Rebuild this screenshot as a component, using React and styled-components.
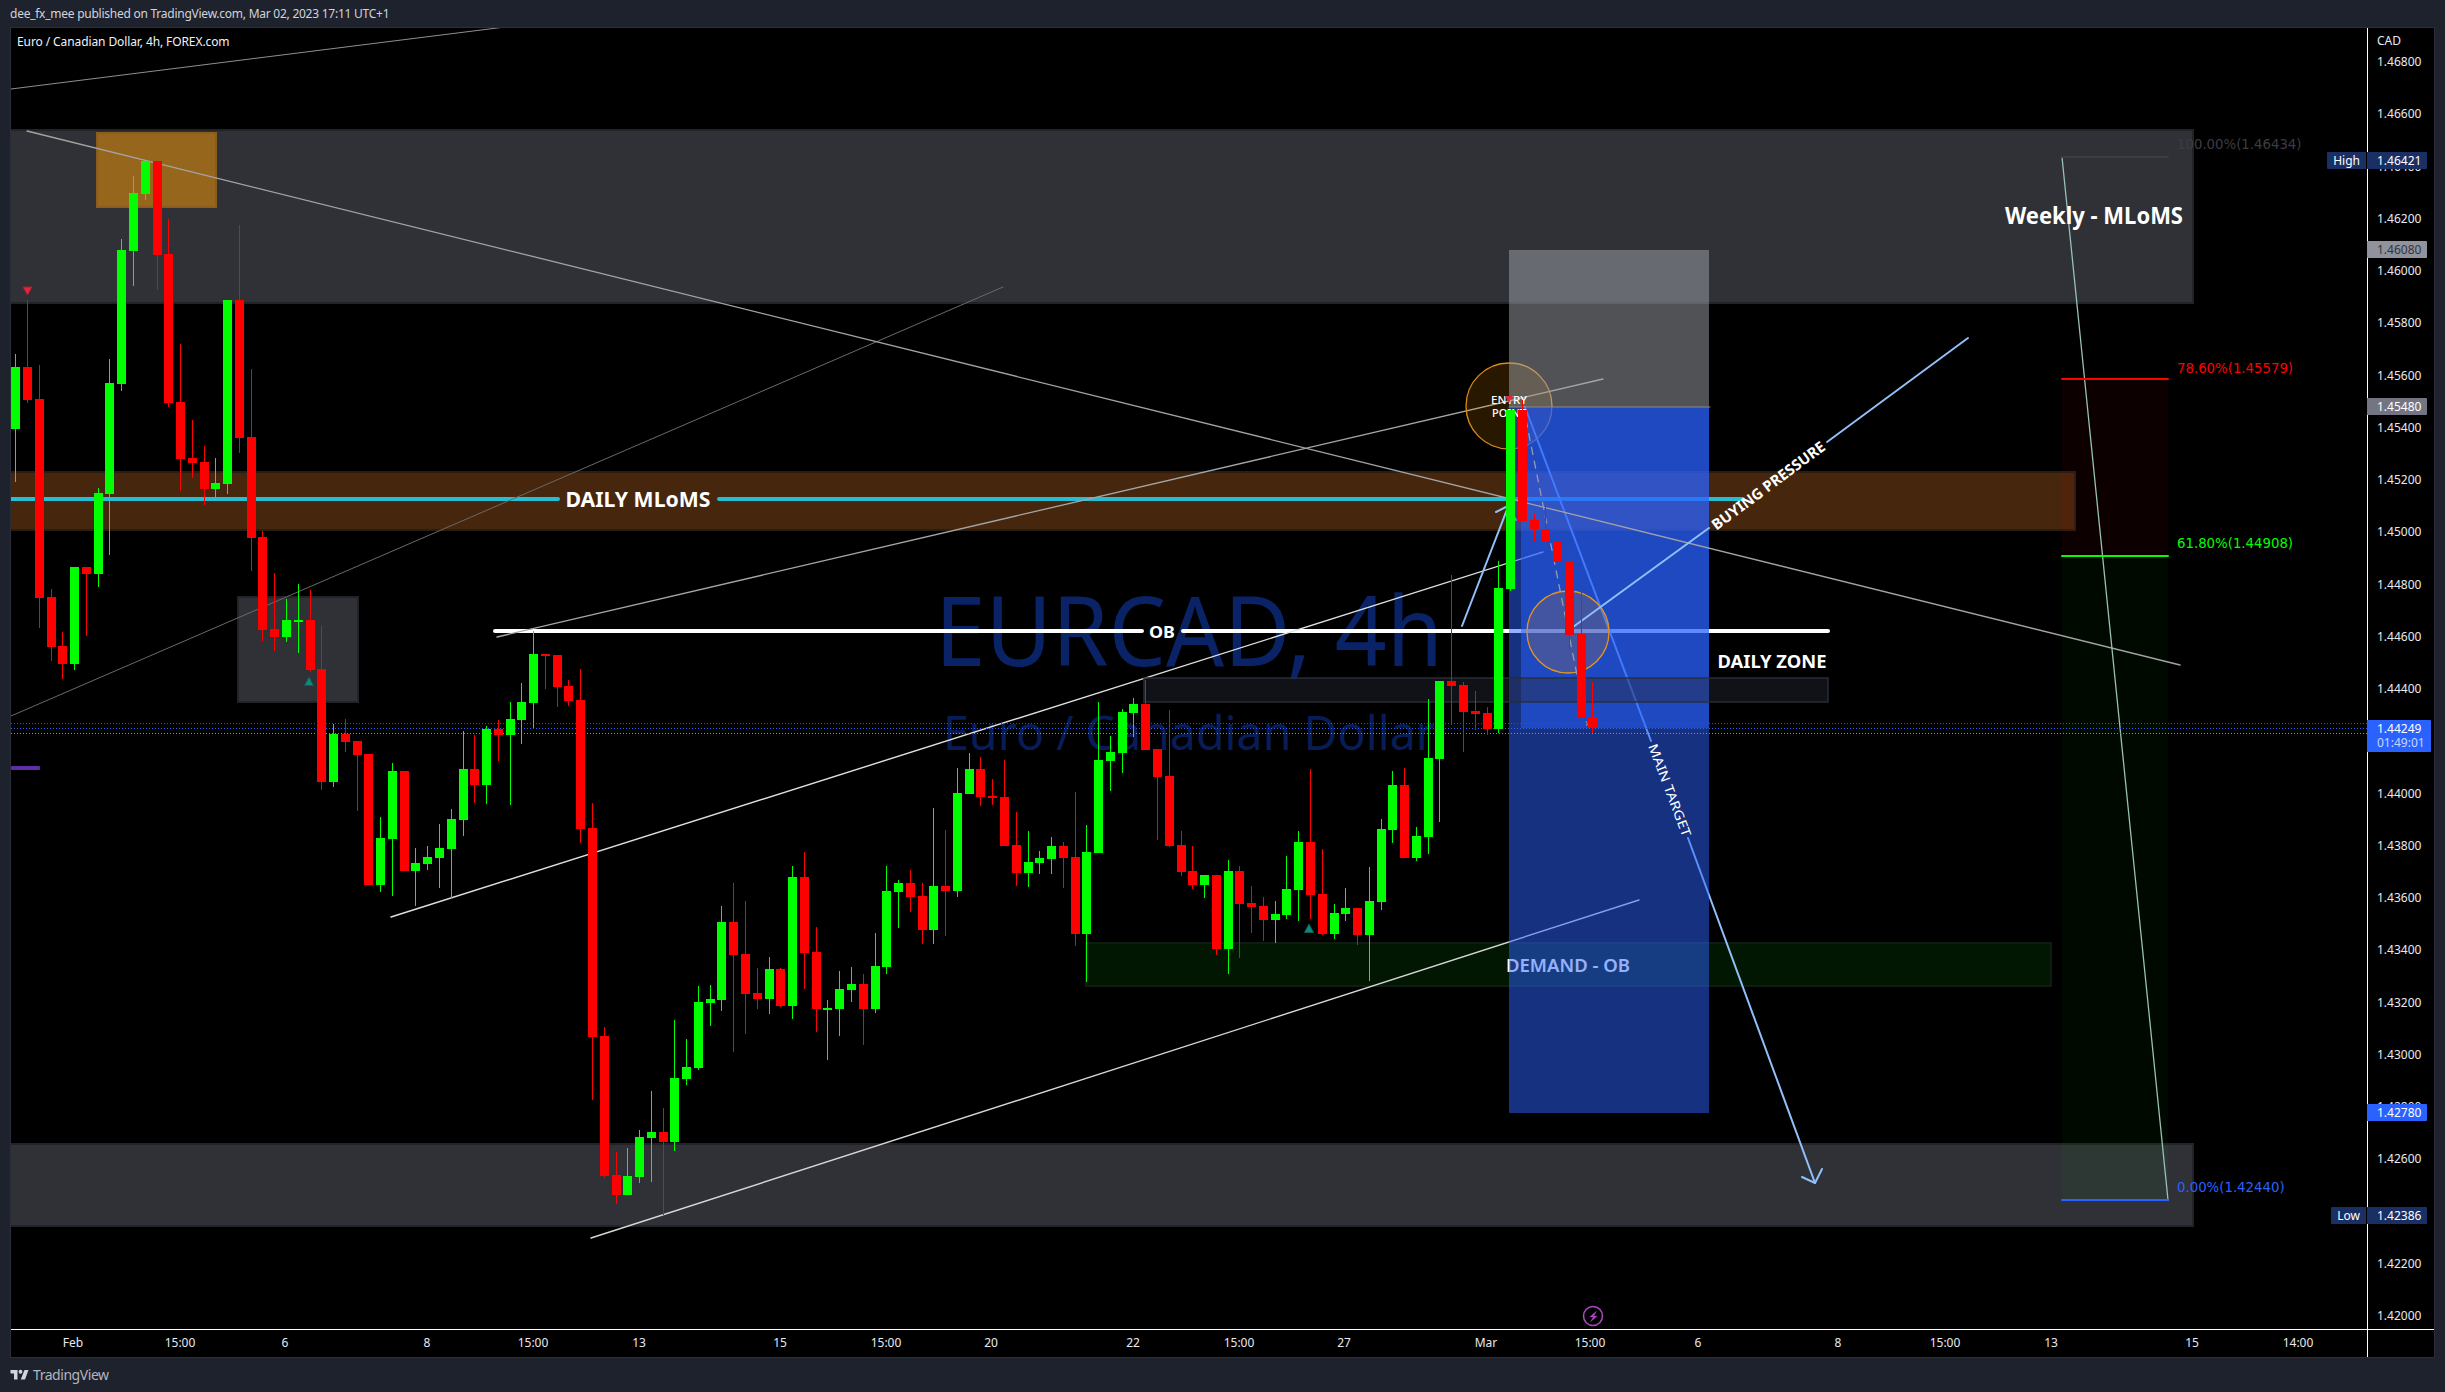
import React from "react";
import styled, { createGlobalStyle } from "styled-components";

const UI_FONT = `"Noto Sans", "Open Sans", "Liberation Sans", sans-serif`;

const GlobalStyle = createGlobalStyle`
  html, body { margin: 0; padding: 0; background: #1e222d; }
  #root { width: 100%; }
`;

const Page = styled.div`
  display: flex;
  flex-direction: column;
  width: 2445px;
  height: 1392px;
  background: #1e222d;
  overflow: hidden;
  font-family: ${UI_FONT};
`;

const TopBar = styled.header`
  flex: 0 0 27px;
  display: flex;
  align-items: center;
  padding-left: 10px;
  color: #d1d4dc;
  font-size: 12px;
  letter-spacing: -0.25px;
  white-space: nowrap;
`;

const ChartFrame = styled.main`
  flex: 0 0 1331px;
  margin: 0 10px;
  box-sizing: border-box;
  border: 1px solid #2a2e39;
  background: #000;
  display: grid;
  grid-template-columns: 2356px 1fr;
  grid-template-rows: 1301px 1fr;
`;

const Pane = styled.section`
  position: relative;
  overflow: hidden;
`;

const Legend = styled.div`
  position: absolute;
  left: 6px;
  top: 6px;
  color: #f0f3fa;
  font-size: 12px;
  letter-spacing: -0.1px;
  line-height: 16px;
  white-space: nowrap;
`;

const PriceAxis = styled.aside`
  position: relative;
  border-left: 1px solid #fff;
  color: #e8eaf0;
  font-size: 12px;
`;

const Currency = styled.span`
  position: absolute;
  left: 9px;
  top: 5px;
  line-height: 16px;
`;

const Tick = styled.span`
  position: absolute;
  left: 9px;
  line-height: 16px;
  transform: translateY(-8px);
`;

const PriceTag = styled.div`
  position: absolute;
  left: -1px;
  width: ${(p) => (p.$wide ? 64 : 60)}px;
  height: ${(p) => (p.$wide ? 32 : 17)}px;
  padding-left: 10px;
  box-sizing: border-box;
  background: ${(p) => p.$bg};
  color: ${(p) => p.$fg || "#fff"};
  border-radius: 0 1px 1px 0;
  line-height: ${(p) => (p.$wide ? 14 : 17)}px;
  padding-top: ${(p) => (p.$wide ? 2 : 0)}px;
`;

const Countdown = styled.div`
  color: #c9d6ff;
`;

const SideTag = styled.div`
  position: absolute;
  right: 68px;
  height: 17px;
  padding: 0 6px;
  background: #1a2f63;
  color: #fff;
  line-height: 17px;
  border-radius: 1px 0 0 1px;
`;

const TimeAxis = styled.nav`
  position: relative;
  border-top: 1px solid #fff;
  color: #e8eaf0;
  font-size: 12px;
`;

const TimeLabel = styled.span`
  position: absolute;
  top: 5px;
  line-height: 16px;
  transform: translateX(-50%);
`;

const AxisCorner = styled.div`
  border-left: 1px solid #fff;
  border-top: 1px solid #fff;
`;

const Footer = styled.footer`
  flex: 1;
  display: flex;
  align-items: center;
  gap: 4px;
  padding: 0 0 2px 10px;
  color: #b2b5be;
  font-size: 14px;
  letter-spacing: -0.45px;
`;

const LogoMark = styled.svg`
  width: 19px;
  height: 11px;
  fill: #d1d4dc;
`;

const Plot = styled.svg`
  display: block;
  width: 2356px;
  height: 1301px;
`;

const Watermark = styled.text`
  font-family: ${UI_FONT};
  fill: ${(p) => p.$fill};
  text-anchor: middle;
`;

const Annotation = styled.text`
  font-family: ${UI_FONT};
  font-weight: ${(p) => p.$weight || 700};
  fill: #fff;
  text-anchor: middle;
  dominant-baseline: central;
`;

const FibLabel = styled.text`
  font-family: "DejaVu Sans", sans-serif;
  font-size: 13.3px;
  fill: ${(p) => p.$fill};
  dominant-baseline: central;
`;

/* top, bottom, wickTop, wickBottom, up */
const CANDLES = [
  [367,429,354,482,1],[367,400,300,403,0],[399,598,365,628,0],[597,647,589,661,0],[646,664,632,679,0],
  [567,664,567,670,1],[567,574,567,636,0],[493,574,488,587,1],[383,494,359,555,1],[250,384,239,391,1],
  [193,251,176,286,1],[161,194,161,200,1],[161,255,161,290,0],[254,403,219,407,0],[402,459,344,491,0],
  [458,463,420,478,0],[462,489,446,505,0],[483,489,458,500,1],[300,484,300,494,1],[300,438,225,453,0],
  [437,538,369,571,0],[537,630,531,641,0],[629,637,573,651,0],[620,637,599,642,1],[620,621,584,653,1],
  [620,670,590,672,0],[669,782,626,790,0],[734,782,724,787,1],[734,742,719,752,0],[741,755,741,811,0],
  [754,885,754,885,0],[838,885,817,892,1],[771,839,763,896,1],[771,871,771,871,0],[863,871,848,906,1],
  [857,864,846,870,1],[848,858,824,888,1],[819,849,809,898,1],[769,820,731,836,1],[769,785,735,803,0],
  [729,785,726,804,1],[729,735,720,761,0],[719,735,702,805,1],[702,720,683,744,1],[654,703,631,728,1],
  [654,656,654,689,0],[655,687,655,707,0],[686,701,680,706,0],[700,829,669,843,0],[828,1037,803,1100,0],
  [1036,1176,1027,1178,0],[1175,1195,1152,1204,0],[1176,1195,1148,1195,1],[1137,1177,1130,1183,1],[1132,1138,1091,1182,1],
  [1132,1142,1108,1215,0],[1078,1142,1020,1151,1],[1067,1079,1039,1085,1],[1002,1068,986,1070,1],[999,1003,985,1026,1],
  [922,1000,906,1011,1],[922,955,883,1052,0],[954,994,901,1034,0],[993,999,968,1009,0],[969,999,957,1014,1],
  [969,1006,968,1007,0],[877,1006,866,1019,1],[877,953,852,989,0],[952,1009,927,1032,0],[1008,1009,1000,1060,1],
  [989,1009,971,1036,1],[984,990,967,1002,1],[984,1009,974,1045,0],[966,1009,933,1013,1],[891,967,866,974,1],
  [883,892,880,928,1],[883,897,870,912,0],[896,930,883,944,0],[886,930,808,944,1],[886,891,830,936,0],
  [793,891,768,897,1],[769,794,753,794,1],[769,797,757,806,0],[796,798,779,805,0],[797,846,760,846,0],
  [845,873,812,886,0],[862,873,831,887,1],[858,863,851,874,1],[846,859,837,874,1],[846,858,842,888,0],
  [857,934,792,946,0],[852,934,825,982,1],[760,853,702,853,1],[752,761,736,791,1],[712,753,709,773,1],
  [704,713,698,737,1],[704,750,680,750,0],[749,777,749,840,0],[776,846,710,847,0],[845,872,831,876,0],
  [871,885,846,889,0],[875,885,875,898,1],[875,949,875,955,0],[871,949,860,974,1],[871,904,866,958,0],
  [903,907,886,933,0],[906,920,897,941,0],[914,920,901,943,1],[889,915,856,919,1],[842,890,831,921,1],
  [842,895,769,919,0],[894,934,849,935,0],[913,934,904,939,1],[908,914,888,921,1],[908,935,908,945,0],
  [901,935,867,981,1],[829,902,819,910,1],[785,830,771,843,1],[785,858,768,858,0],[836,858,827,861,1],
  [758,837,699,854,1],[681,759,681,822,1],[681,686,575,725,0],[685,712,682,752,0],[711,714,691,730,0],
  [713,729,707,735,0],[588,729,561,733,1],[410,589,410,591,1],[410,521,400,521,0],[520,529,514,542,0],
  [529,542,506,556,0],[541,562,535,566,0],[561,635,544,649,0],[634,717,590,728,0],[717,728,682,733,0],
];

const PRICE_TICKS = Array.from({ length: 25 }, (_, k) => ({
  label: (1.468 - k * 0.002).toFixed(5),
  y: 62 + 52.25 * k,
}));

const TIME_LABELS = [
  ["Feb", 73], ["15:00", 180], ["6", 285], ["8", 427], ["15:00", 533], ["13", 639], ["15", 780],
  ["15:00", 886], ["20", 991], ["22", 1133], ["15:00", 1239], ["27", 1344], ["Mar", 1486], ["15:00", 1590],
  ["6", 1698], ["8", 1838], ["15:00", 1945], ["13", 2051], ["15", 2192], ["14:00", 2298],
];

const Candle = ({ c, i }) => {
  const x = Math.round(15.3 + 11.77 * i);
  const color = c[4] ? "#00ff00" : "#ff0000";
  return (
    <g fill={color}>
      <rect x={x} y={c[2]} width={1} height={c[3] - c[2]} />
      <rect x={x - 4} y={c[0]} width={9} height={Math.max(c[1] - c[0], 2)} />
    </g>
  );
};

const Zone = ({ x1, x2, y1, y2, fill, stroke, w = 2 }) => (
  <rect x={x1} y={y1} width={x2 - x1} height={y2 - y1} fill={fill} stroke={stroke} strokeWidth={w} />
);

const Line = ({ d, stroke, w = 1, dash }) => (
  <polyline points={d} fill="none" stroke={stroke} strokeWidth={w} strokeDasharray={dash} strokeLinecap="round" strokeLinejoin="round" />
);

const PriceLine = ({ y, stroke }) => (
  <line x1="11" x2="2367" y1={y} y2={y} stroke={stroke} strokeWidth="1" strokeDasharray="1 2" shapeRendering="crispEdges" />
);

const Arrow = "#90bff9";

const ChartDrawing = () => (
  <Plot viewBox="11 28 2356 1301">
    <Watermark x="1189" y="666" $fill="#0a2266" fontSize="96" textLength="508" lengthAdjust="spacingAndGlyphs">EURCAD, 4h</Watermark>
    <Watermark x="1189" y="750" $fill="#081d57" fontSize="47" textLength="492" lengthAdjust="spacingAndGlyphs">Euro / Canadian Dollar</Watermark>

    <Zone x1={0} x2={2193} y1={130} y2={303} fill="#2f3137" stroke="#212328" />
    <Zone x1={0} x2={2193} y1={1144} y2={1226} fill="#2f3137" stroke="#212328" />
    <Zone x1={238} x2={358} y1={597} y2={702} fill="#2f3137" stroke="#212328" />
    <Zone x1={97} x2={216} y1={133} y2={207} fill="#96661c" stroke="#8a5d1c" />
    <Zone x1={0} x2={2075} y1={472} y2={530} fill="#46260c" stroke="#2a1d12" />
    <Zone x1={1086} x2={2051} y1={943} y2={986} fill="#021702" stroke="#101c11" />

    <rect x="2062" y="379" width="106" height="177" fill="rgba(255,0,0,0.05)" />
    <rect x="2062" y="556" width="106" height="644" fill="rgba(0,255,0,0.035)" />

    <Line d="11,499 558,499" stroke="#24bfd6" w={4} />
    <Line d="719,499 1743,499" stroke="#24bfd6" w={4} />
    <Line d="495,631 1142,631" stroke="#ffffff" w={4} />
    <Line d="1183,631 1828,631" stroke="#ffffff" w={4} />
    <Annotation x="638" y="499" fontSize="21" textLength="145" lengthAdjust="spacingAndGlyphs">DAILY MLoMS</Annotation>
    <Annotation x="1162" y="632" fontSize="16" textLength="26" lengthAdjust="spacingAndGlyphs">OB</Annotation>
    <Annotation x="1568" y="965" fontSize="18" $weight={600} textLength="124" lengthAdjust="spacingAndGlyphs">DEMAND - OB</Annotation>

    <Line d="11,89 505,27" stroke="#8f8f8f" />
    <Line d="11,716 1003,287" stroke="#6a6a6a" />
    <Line d="497,637 1603,379" stroke="#a6a6a6" w={1.3} />
    <Line d="391,917 1543,552" stroke="#e0e0e0" w={1.4} />
    <Line d="591,1238 1639,900" stroke="#d8d8d8" w={1.4} />
    <Line d="1462,626 1508,507" stroke={Arrow} w={2} />
    <Line d="1496,512 1508,506 1516,520" stroke={Arrow} w={2} />
    <Line d="1525,407 1651,741" stroke={Arrow} w={2} />
    <Line d="1688,838 1815,1183" stroke={Arrow} w={2} />
    <Line d="1802,1177 1815,1183 1822,1169" stroke={Arrow} w={2} />

    <circle cx="1509" cy="406" r="43" fill="rgba(255,152,0,0.16)" stroke="#d98a14" strokeWidth="1.3" />

    <rect x="1509" y="250" width="200" height="157" fill="rgba(160,163,170,0.5)" />
    <rect x="1509" y="407" width="200" height="706" fill="rgba(41,98,255,0.5)" />
    <rect x="1521" y="407" width="188" height="321" fill="rgba(41,98,255,0.5)" />
    <Line d="1509,407 1710,407" stroke="#8a8a8a" w={1} />

    <circle cx="1568" cy="632" r="41" fill="rgba(255,152,0,0.16)" stroke="#e8941a" strokeWidth="1.3" />
    <Zone x1={1144} x2={1828} y1={678} y2={702} fill="rgba(42,46,57,0.4)" stroke="rgba(42,46,57,0.7)" />

    <Line d="27,131 2180,665" stroke="#a3a3a3" w={1.3} />
    <Line d="1526,420 1587,725" stroke="#9a9aa8" w={1.3} dash="7 7" />
    <Line d="1573,627 1709,528" stroke={Arrow} w={2} />
    <Line d="1827,442 1968,338" stroke={Arrow} w={2} />
    <Line d="2062,157 2168,1200" stroke="#97c0b6" w={1.3} />

    <Line d="2062,157 2168,157" stroke="#3a3d45" w={2} />
    <Line d="2062,379 2168,379" stroke="#ff0000" w={2} />
    <Line d="2062,556 2168,556" stroke="#00ff00" w={2} />
    <Line d="2062,1200 2168,1200" stroke="#2962ff" w={2} />
    <FibLabel x="2177" y="144" $fill="#3a3d45">100.00%(1.46434)</FibLabel>
    <FibLabel x="2177" y="368" $fill="#ff0000">78.60%(1.45579)</FibLabel>
    <FibLabel x="2177" y="543" $fill="#00ff00">61.80%(1.44908)</FibLabel>
    <FibLabel x="2177" y="1187" $fill="#2962ff">0.00%(1.42440)</FibLabel>

    <Annotation x="2094" y="214" fontSize="24" textLength="178" lengthAdjust="spacingAndGlyphs">Weekly - MLoMS</Annotation>
    <Annotation x="1772" y="661" fontSize="18" textLength="109" lengthAdjust="spacingAndGlyphs">DAILY ZONE</Annotation>
    <Annotation x="0" y="0" fontSize="15" textLength="137" lengthAdjust="spacingAndGlyphs" transform="translate(1768 485) rotate(-36.6)">BUYING PRESSURE</Annotation>
    <Annotation x="0" y="0" fontSize="13" $weight={400} textLength="98" lengthAdjust="spacingAndGlyphs" transform="translate(1670 790) rotate(69.3)">MAIN TARGET</Annotation>

    <PriceLine y={723} stroke="#e01818" />
    <PriceLine y={728} stroke="#2962ff" />
    <PriceLine y={733} stroke="#20e020" />
    <rect x="11" y="766" width="29" height="4" rx="1" fill="#5e2da8" />

    <Annotation x="1509" y="399" fontSize="11.5" $weight={500} textLength="36" lengthAdjust="spacingAndGlyphs">ENTRY</Annotation>
    <Annotation x="1509" y="412" fontSize="11.5" $weight={500} textLength="34" lengthAdjust="spacingAndGlyphs">POINT</Annotation>

    <g shapeRendering="crispEdges">
      {CANDLES.map((c, i) => <Candle key={i} c={c} i={i} />)}
    </g>

    <path d="M23 287h9l-4.5 8z" fill="#e0273f" stroke="#b01c30" strokeWidth="1" />
    <path d="M1505 396h8l-4 7z" fill="#e0273f" />
    <path d="M309 677l4.5 8.500h-9z" fill="#0e8a7c" stroke="#0a5f56" strokeWidth="1" />
    <path d="M1309 924l4.500 8.500h-9z" fill="#0e8a7c" stroke="#0a5f56" strokeWidth="1" />

    <circle cx="1593" cy="1316" r="9.500" fill="none" stroke="#ab47bc" strokeWidth="1.600" />
    <path d="M1597 1310.500l-7.500 6.500h3.500l-3 5.500 7.500-6.500h-3.500l3-5.500z" fill="#ab47bc" />
  </Plot>
);

const App = () => (
  <>
    <GlobalStyle />
    <Page>
      <TopBar>dee_fx_mee published on TradingView.com, Mar 02, 2023 17:11 UTC+1</TopBar>
      <ChartFrame>
        <Pane>
          <ChartDrawing />
          <Legend>Euro / Canadian Dollar, 4h, FOREX.com</Legend>
        </Pane>
        <PriceAxis>
          <Currency>CAD</Currency>
          {PRICE_TICKS.map((t) => (
            <Tick key={t.label} style={{ top: t.y - 28 }}>{t.label}</Tick>
          ))}
          <SideTag style={{ top: 124 }}>High</SideTag>
          <PriceTag $bg="#1a2f63" style={{ top: 124 }}>1.46421</PriceTag>
          <PriceTag $bg="#90939d" $fg="#33353c" style={{ top: 213 }}>1.46080</PriceTag>
          <PriceTag $bg="#737682" style={{ top: 370 }}>1.45480</PriceTag>
          <PriceTag $bg="#2962ff" $wide style={{ top: 692 }}>
            1.44249
            <Countdown>01:49:01</Countdown>
          </PriceTag>
          <PriceTag $bg="#2962ff" style={{ top: 1076 }}>1.42780</PriceTag>
          <SideTag style={{ top: 1179 }}>Low</SideTag>
          <PriceTag $bg="#1a2f63" style={{ top: 1179 }}>1.42386</PriceTag>
        </PriceAxis>
        <TimeAxis>
          {TIME_LABELS.map(([t, x], i) => (
            <TimeLabel key={i} style={{ left: x - 11 }}>{t}</TimeLabel>
          ))}
        </TimeAxis>
        <AxisCorner />
      </ChartFrame>
      <Footer>
        <LogoMark viewBox="0 0 36 22">
          <path d="M14 2H0v7h7v12h7V2Z" />
          <circle cx="20" cy="5.500" r="3.800" />
          <path d="M29 21h-8.500L28 2h8l-7 19Z" />
        </LogoMark>
        TradingView
      </Footer>
    </Page>
  </>
);

export default App;
